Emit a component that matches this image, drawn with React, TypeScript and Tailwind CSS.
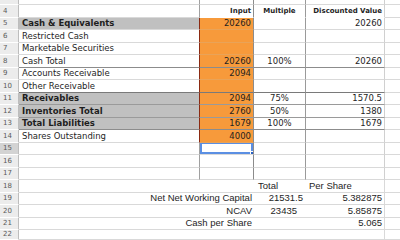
import type { ReactNode } from 'react';

type Row = {
    n: number;
    h: string;
    a?: ReactNode;
    b?: ReactNode;
    c?: ReactNode;
    d?: ReactNode;
    bold?: boolean;
    orange?: boolean;
    line?: string;
    head?: boolean;
    sel?: boolean;
    bottom?: boolean;
};

const rows: Row[] = [
    { n: 3, h: 'h-[5px]', head: true },
    { n: 4, h: 'h-[13px]', head: true },
    { n: 5, h: 'h-[12px]', a: 'Cash & Equivalents', bold: true, orange: true, b: '20260', d: '20260' },
    { n: 6, h: 'h-[13px]', a: 'Restricted Cash', orange: true },
    { n: 7, h: 'h-[12px]', a: 'Marketable Securities', orange: true },
    { n: 8, h: 'h-[13px]', a: 'Cash Total', orange: true, b: '20260', c: '100%', d: '20260', line: 'border-b-[#8c8c8c]' },
    { n: 9, h: 'h-[12px]', a: 'Accounts Receivable', orange: true, b: '2094' },
    { n: 10, h: 'h-[13px]', a: 'Other Receivable', orange: true, line: 'border-b-[#7a7a7a]' },
    { n: 11, h: 'h-[12px]', a: 'Receivables', bold: true, orange: true, b: '2094', c: '75%', d: '1570.5', line: 'border-b-[#9a9a9a]' },
    { n: 12, h: 'h-[13px]', a: 'Inventories Total', bold: true, orange: true, b: '2760', c: '50%', d: '1380', line: 'border-b-[#9a9a9a]' },
    { n: 13, h: 'h-[12px]', a: 'Total Liabilities', bold: true, orange: true, b: '1679', c: '100%', d: '1679', line: 'border-b-[#8c8c8c]' },
    { n: 14, h: 'h-[13px]', a: 'Shares Outstanding', orange: true, b: '4000' },
    { n: 15, h: 'h-[12px]', sel: true },
    { n: 16, h: 'h-[13px]' },
    { n: 17, h: 'h-[12px]' },
    { n: 18, h: 'h-[13px]', bottom: true },
    { n: 19, h: 'h-[12px]', bottom: true },
    { n: 20, h: 'h-[13px]', bottom: true },
    { n: 21, h: 'h-[12px]', bottom: true },
    { n: 22, h: 'h-[10px]', bottom: true },
];

const verdana = "font-['DejaVu_Sans',sans-serif] text-[8.5px] text-[#1e1e1e]";
const arial = "font-['Liberation_Sans',Arial,sans-serif] text-[9.5px] text-[#1e1e1e]";

const bottomText: Record<number, { ab?: string; c?: string; d?: string; cpad?: string }> = {
    18: { c: 'Total', d: 'Per Share' },
    19: { ab: 'Net Net Working Capital', c: '21531.5', d: '5.382875' },
    20: { ab: 'NCAV', c: '23435', d: '5.85875', cpad: 'pr-[9px]' },
    21: { ab: 'Cash per Share', d: '5.065' },
};

function SheetRow({ row }: { row: Row }) {
    const line = row.line ?? 'border-b-[#d9d9d9]';
    const base = `border-b ${line} flex items-center overflow-hidden`;
    const upperLines = row.n <= 17;

    if (row.bottom) {
        const t = bottomText[row.n] ?? {};
        return (
            <div className={`flex ${row.h}`}>
                <RowNum n={row.n} />
                <div className={`w-[235px] ${base} justify-end pr-[2px] ${arial}`}>{t.ab}</div>
                <div className={`w-[52px] ${base} ${t.c === 'Total' ? 'justify-start pl-[4px]' : `justify-end ${t.cpad ?? 'pr-[3px]'}`} ${arial}`}>{t.c}</div>
                <div className={`w-[79px] ${base} border-r border-r-[#d9d9d9] ${t.d === 'Per Share' ? 'justify-start pl-[3px]' : 'justify-end pr-[2px]'} ${arial}`}>{t.d}</div>
                <div className={`flex-1 ${base}`} />
            </div>
        );
    }

    return (
        <div className={`flex ${row.h}`}>
            <RowNum n={row.n} active={row.sel} />
            <div
                className={`w-[181px] ${base} border-r pl-[3px] ${row.orange ? 'border-r-[#8a2a12]' : 'border-r-[#a0a0a0]'} ${row.bold ? 'bg-[#c0c0c0] font-bold' : 'bg-white'} ${verdana}`}
            >
                {row.a}
            </div>
            <div
                className={`relative w-[54px] ${base} border-r border-r-[#8c8c8c] justify-end pr-[2px] ${row.orange ? 'bg-[#f79a3b]' : 'bg-white'} ${row.orange && !row.line ? 'border-b-[#e9a358]' : ''} ${row.n === 4 ? 'justify-center pr-0 border-b-transparent' : ''} ${verdana}`}
            >
                {row.n === 4 ? <span className="text-[7px] font-bold">Input</span> : row.b}
                {row.sel && (
                    <>
                        <div className="absolute inset-0 -top-px border-2 border-[#5b8fe3]" />
                        <div className="absolute -right-[2px] -bottom-[2px] h-[5px] w-[5px] bg-[#2a62c4] border border-white" />
                    </>
                )}
            </div>
            <div
                className={`w-[52px] ${base} border-r ${upperLines ? 'border-r-[#9a9a9a]' : 'border-r-[#d9d9d9]'} justify-center ${row.n === 4 ? 'border-b-transparent' : ''} ${verdana}`}
            >
                {row.n === 4 ? <span className="text-[7px] font-bold">Multiple</span> : row.c}
            </div>
            <div
                className={`w-[79px] ${base} border-r border-r-[#d0d0d0] justify-end pr-[2px] ${row.n === 4 ? 'justify-center pr-0 border-b-transparent' : ''} ${verdana}`}
            >
                {row.n === 4 ? <span className="text-[7px] font-bold">Discounted Value</span> : row.d}
            </div>
            <div className={`flex-1 ${base} border-b-[#d9d9d9]`} />
        </div>
    );
}

function RowNum({ n, active }: { n: number; active?: boolean }) {
    return (
        <div
            className={`w-[19px] shrink-0 flex items-center pl-[3px] border-r border-r-[#bdbdbd] border-b border-b-white font-['DejaVu_Sans',sans-serif] text-[7px] text-[#5a5a5a] ${active ? 'bg-[#d3d3d3]' : 'bg-[#ececec]'}`}
        >
            {n === 3 ? '' : n}
        </div>
    );
}

export default function App() {
    return (
        <div className="w-[400px] h-[240px] overflow-hidden bg-white">
            {rows.map((r) => (
                <SheetRow key={r.n} row={r} />
            ))}
        </div>
    );
}
